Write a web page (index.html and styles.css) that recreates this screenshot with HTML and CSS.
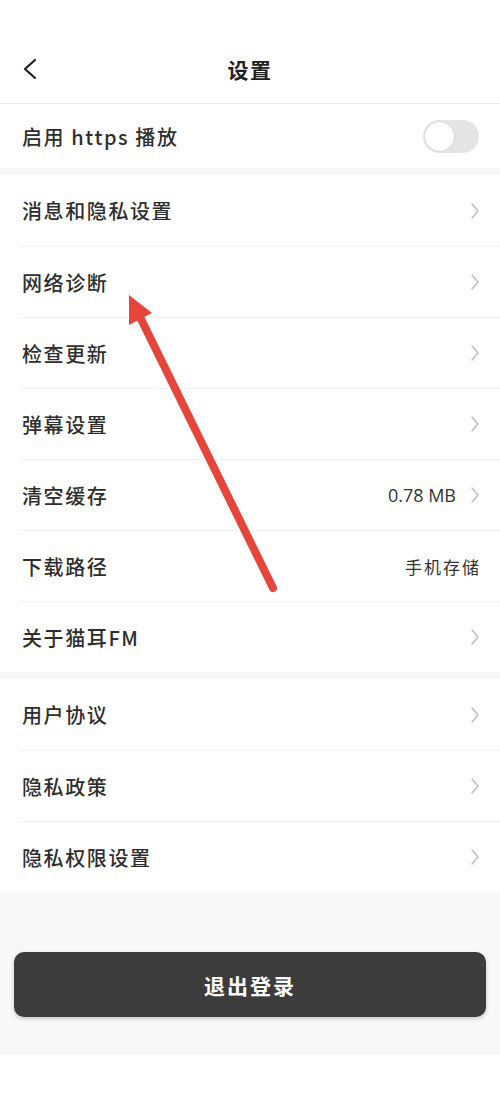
FILE: index.html
```html
<!DOCTYPE html>
<html lang="zh-CN">
<head>
<meta charset="utf-8">
<title>设置</title>
<link rel="stylesheet" href="styles.css">
</head>
<body>
<div class="page">
  <div class="status"></div>
  <header class="nav">
    <svg class="back" width="16" height="22" viewBox="0 0 16 22"><path d="M13 2 L3 11 L13 20" fill="none" stroke="#222" stroke-width="2.2" stroke-linecap="round" stroke-linejoin="round"/></svg>
    <div class="title">设置</div>
  </header>

  <section class="group">
    <div class="row row-toggle">
      <span class="label">启用 https 播放</span>
      <span class="toggle"><span class="knob"></span></span>
    </div>
  </section>
  <div class="gap"></div>

  <section class="group">
    <div class="row"><span class="label">消息和隐私设置</span><svg class="chev" width="10" height="18" viewBox="0 0 10 18"><path d="M2 2 L8 9 L2 16" fill="none" stroke="#bdbdbd" stroke-width="1.5" stroke-linecap="round" stroke-linejoin="round"/></svg></div>
    <div class="row"><span class="label">网络诊断</span><svg class="chev" width="10" height="18" viewBox="0 0 10 18"><path d="M2 2 L8 9 L2 16" fill="none" stroke="#bdbdbd" stroke-width="1.5" stroke-linecap="round" stroke-linejoin="round"/></svg></div>
    <div class="row"><span class="label">检查更新</span><svg class="chev" width="10" height="18" viewBox="0 0 10 18"><path d="M2 2 L8 9 L2 16" fill="none" stroke="#bdbdbd" stroke-width="1.5" stroke-linecap="round" stroke-linejoin="round"/></svg></div>
    <div class="row"><span class="label">弹幕设置</span><svg class="chev" width="10" height="18" viewBox="0 0 10 18"><path d="M2 2 L8 9 L2 16" fill="none" stroke="#bdbdbd" stroke-width="1.5" stroke-linecap="round" stroke-linejoin="round"/></svg></div>
    <div class="row"><span class="label">清空缓存</span><span class="right"><span class="value">0.78 MB</span><svg class="chev" width="10" height="18" viewBox="0 0 10 18"><path d="M2 2 L8 9 L2 16" fill="none" stroke="#bdbdbd" stroke-width="1.5" stroke-linecap="round" stroke-linejoin="round"/></svg></span></div>
    <div class="row"><span class="label">下载路径</span><span class="value value-cn">手机存储</span></div>
    <div class="row"><span class="label">关于猫耳FM</span><svg class="chev" width="10" height="18" viewBox="0 0 10 18"><path d="M2 2 L8 9 L2 16" fill="none" stroke="#bdbdbd" stroke-width="1.5" stroke-linecap="round" stroke-linejoin="round"/></svg></div>
  </section>
  <div class="gap"></div>

  <section class="group">
    <div class="row"><span class="label">用户协议</span><svg class="chev" width="10" height="18" viewBox="0 0 10 18"><path d="M2 2 L8 9 L2 16" fill="none" stroke="#bdbdbd" stroke-width="1.5" stroke-linecap="round" stroke-linejoin="round"/></svg></div>
    <div class="row"><span class="label">隐私政策</span><svg class="chev" width="10" height="18" viewBox="0 0 10 18"><path d="M2 2 L8 9 L2 16" fill="none" stroke="#bdbdbd" stroke-width="1.5" stroke-linecap="round" stroke-linejoin="round"/></svg></div>
    <div class="row"><span class="label">隐私权限设置</span><svg class="chev" width="10" height="18" viewBox="0 0 10 18"><path d="M2 2 L8 9 L2 16" fill="none" stroke="#bdbdbd" stroke-width="1.5" stroke-linecap="round" stroke-linejoin="round"/></svg></div>
  </section>

  <div class="footer">
    <div class="logout">退出登录</div>
  </div>

  <svg class="arrow" width="500" height="1111" viewBox="0 0 500 1111">
    <line x1="273" y1="588" x2="140" y2="317" stroke="#e5453b" stroke-width="8" stroke-linecap="round"/>
    <polygon points="129,295 152,313 129,325" fill="#e5453b"/>
  </svg>
</div>
</body>
</html>
```

FILE: styles.css
```css
* { box-sizing: border-box; }
html, body { margin: 0; padding: 0; background: #fff; }
body {
  font-family: "Noto Sans CJK SC", "Noto Sans", sans-serif;
  color: #333;
}
.page {
  position: relative;
  width: 500px;
  min-height: 1111px;
  background: #fff;
}
.status { height: 34px; }
.nav {
  position: relative;
  height: 70px;
  display: flex;
  align-items: center;
  justify-content: center;
  border-bottom: 1px solid #ececec;
}
.back {
  position: absolute;
  left: 22px;
  top: 24px;
}
.title {
  font-size: 21px;
  font-weight: 700;
  color: #222;
  letter-spacing: 1.5px;
}
.group { background: #fff; }
.gap { height: 7px; background: #f8f8f8; }
.row {
  height: 71px;
  margin-left: 20px;
  padding: 0 21px 0 2px;
  display: flex;
  align-items: center;
  justify-content: space-between;
  border-top: 1px solid #f2f2f2;
}
.row:first-child { border-top: none; }
.row-toggle { height: 64px; }
.label {
  font-size: 20px;
  letter-spacing: 1.6px;
  color: #2e2e2e;
  font-weight: 500;
}
.right { display: flex; align-items: center; gap: 14px; }
.value {
  font-size: 18px;
  color: #333;
  font-family: "Open Sans", "Noto Sans CJK SC", sans-serif;
}
.value-cn {
  font-family: "Noto Sans CJK SC", sans-serif;
  font-size: 17px;
  letter-spacing: 2px;
  margin-right: -2px;
}
.chev { display: block; margin-right: -1px; }
.toggle {
  width: 56px;
  height: 33px;
  border-radius: 17px;
  background: #e4e4e4;
  display: flex;
  align-items: center;
  padding: 2px;
}
.knob {
  width: 29px;
  height: 29px;
  border-radius: 50%;
  background: #fff;
  box-shadow: 0 0 1px rgba(0,0,0,0.25);
}
.footer {
  background: #f8f8f8;
  padding: 60px 14px 38px;
}
.logout {
  height: 65px;
  border-radius: 10px;
  background: #3c3c3c;
  color: #fff;
  font-size: 21px;
  font-weight: 700;
  letter-spacing: 2px;
  display: flex;
  align-items: center;
  justify-content: center;
  box-shadow: 0 2px 4px rgba(0,0,0,0.2);
}
.arrow {
  position: absolute;
  left: 0;
  top: 0;
  pointer-events: none;
}
```
